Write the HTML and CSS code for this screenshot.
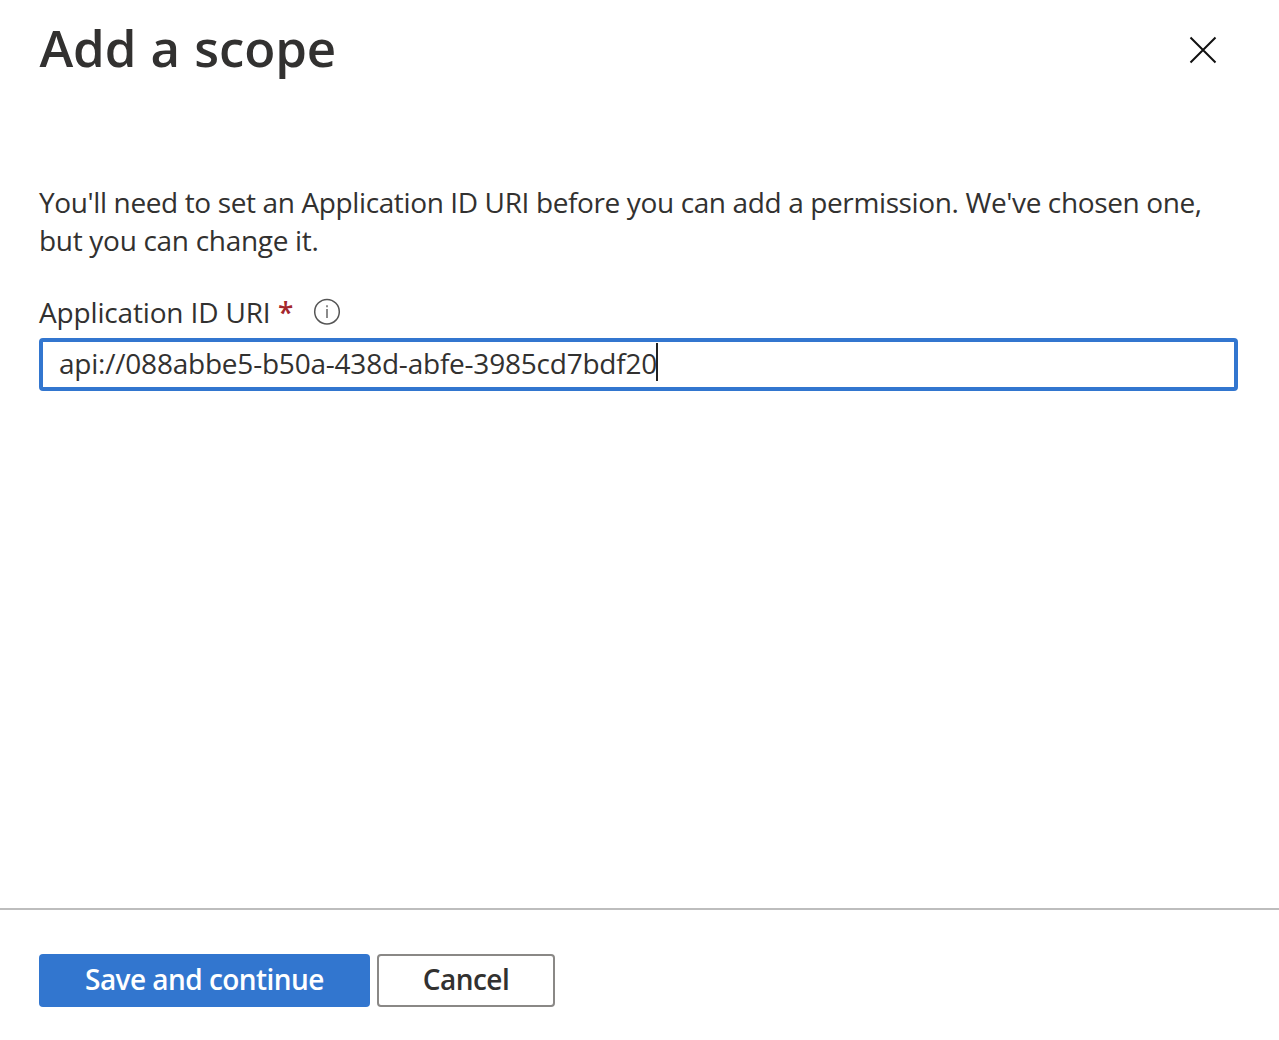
FILE: index.html
```html
<!DOCTYPE html>
<html lang="en">
<head>
<meta charset="utf-8">
<title>Add a scope</title>
<link rel="stylesheet" href="styles.css">
</head>
<body>
<main class="panel">
  <header class="header">
    <h1 class="title">Add a scope</h1>
    <button class="close" aria-label="Close"><svg width="28" height="28" viewBox="0 0 28 28"><path d="M1.5 1.5l25 25M26.5 1.5l-25 25" fill="none" stroke="#111" stroke-width="2"/></svg></button>
  </header>
  <section class="content">
    <p class="intro"><span class="line-one">You'll need to set an Application ID URI before you can add a permission. We've chosen one,</span><br><span class="line-two">but you can change it.</span></p>
    <div class="label-row">
      <span class="label">Application ID URI</span>
      <span class="required">*</span>
      <svg class="info" width="28" height="28" viewBox="0 0 28 28"><circle cx="14" cy="13.7" r="12.3" fill="none" stroke="#555" stroke-width="1.5"/><path d="M14 11v9M14 7.2v2" stroke="#666" stroke-width="1.5"/></svg>
    </div>
    <div class="field"><span class="value">api://088abbe5-b50a-438d-abfe-3985cd7bdf20</span><span class="caret"></span></div>
  </section>
  <footer class="footer">
    <button class="button primary">Save and continue</button>
    <button class="button secondary">Cancel</button>
  </footer>
</main>
</body>
</html>
```
FILE: styles.css
```css
* { box-sizing: border-box; }
body { margin: 0; background: #fff; color: #323130; font-family: "Open Sans", "Noto Sans", sans-serif; }
.panel { display: flex; flex-direction: column; height: 1040px; overflow: hidden; }
.header { display: flex; justify-content: space-between; align-items: center; height: 100px; padding: 0 62px 0 39.5px; }
.title { margin: 0; padding-bottom: 6px; font-size: 51px; font-weight: 600; line-height: 72px; letter-spacing: -0.1px; word-spacing: 1px; white-space: nowrap; }
.close { display: flex; padding: 0; border: 0; background: none; }
.content { flex: 1; padding: 83px 41px 0 39px; }
.intro { margin: 0; font-size: 28px; line-height: 38px; white-space: nowrap; }
.line-one { letter-spacing: -0.375px; }
.line-two { letter-spacing: -0.3px; }
.label-row { display: flex; align-items: center; height: 38px; margin-top: 34px; font-size: 28px; }
.label { width: 231px; letter-spacing: -0.16px; white-space: nowrap; }
.required { width: 14px; margin-left: 8px; color: #a4262c; font-weight: 600; }
.info { margin-left: 21px; }
.field { display: flex; align-items: center; height: 53px; margin-top: 7px; padding-left: 16px; border: 4px solid #3276cf; border-radius: 4px; font-size: 28px; }
.value { width: 597px; padding-bottom: 4px; letter-spacing: -0.22px; white-space: nowrap; }
.caret { width: 2px; height: 38px; margin-bottom: 5px; background: #222; }
.footer { display: flex; gap: 7px; height: 132px; padding-top: 44px; padding-left: 39px; border-top: 2px solid #bdbdbd; }
.button { height: 53px; padding: 0 0 3px; border-radius: 4px; font: 600 28px "Open Sans", "Noto Sans", sans-serif; letter-spacing: -0.54px; }
.primary { width: 331px; border: 0; color: #fff; background: #3276cf; }
.secondary { width: 178px; border: 2px solid #8a8886; color: #323130; background: #fff; }
```
